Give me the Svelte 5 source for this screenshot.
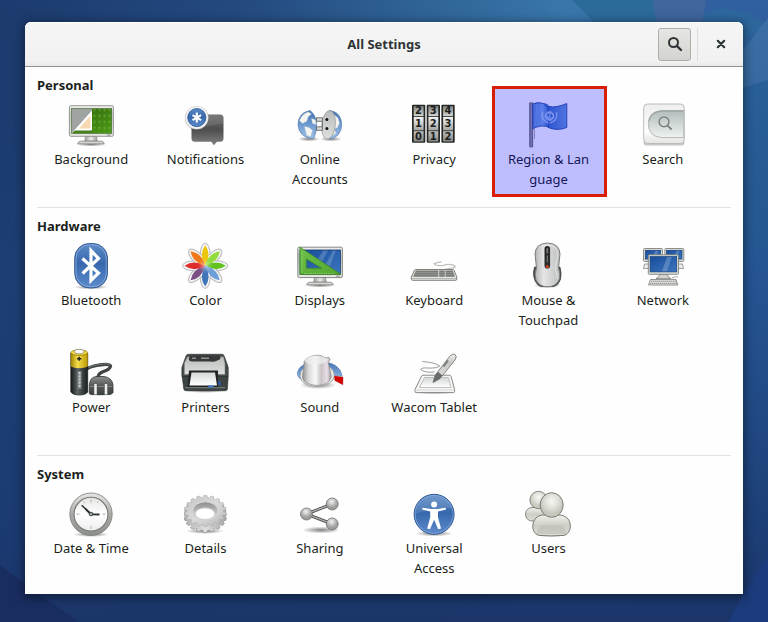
<script>
  const sections = [
    {
      title: 'Personal',
      items: [
        { icon: 'background', lines: ['Background'] },
        { icon: 'notifications', lines: ['Notifications'] },
        { icon: 'accounts', lines: ['Online', 'Accounts'] },
        { icon: 'privacy', lines: ['Privacy'] },
        { icon: 'region', lines: ['Region & Lan', 'guage'], marked: true },
        { icon: 'search', lines: ['Search'] }
      ]
    },
    {
      title: 'Hardware',
      items: [
        { icon: 'bluetooth', lines: ['Bluetooth'] },
        { icon: 'color', lines: ['Color'] },
        { icon: 'displays', lines: ['Displays'] },
        { icon: 'keyboard', lines: ['Keyboard'] },
        { icon: 'mouse', lines: ['Mouse &', 'Touchpad'] },
        { icon: 'network', lines: ['Network'] },
        { icon: 'power', lines: ['Power'] },
        { icon: 'printers', lines: ['Printers'] },
        { icon: 'sound', lines: ['Sound'] },
        { icon: 'wacom', lines: ['Wacom Tablet'] }
      ]
    },
    {
      title: 'System',
      items: [
        { icon: 'clock', lines: ['Date & Time'] },
        { icon: 'details', lines: ['Details'] },
        { icon: 'sharing', lines: ['Sharing'] },
        { icon: 'access', lines: ['Universal', 'Access'] },
        { icon: 'users', lines: ['Users'] }
      ]
    }
  ];

  const petals = ['#edc60a', '#93dc3c', '#62c31e', '#6f9fd8', '#3f74b8', '#7b4f86', '#e02b2b', '#f2791a'];

  const wheels = [
    { x: 2, digits: ['2', '1', '0'] },
    { x: 16.7, digits: ['3', '2', '1'] },
    { x: 31.4, digits: ['4', '3', '2'] }
  ];

  function gearPath(cx, cy, rx, ry, teeth) {
    let d = '';
    for (let i = 0; i < teeth; i++) {
      const steps = [[-0.34, 0.87], [-0.22, 1], [0.22, 1], [0.34, 0.87]];
      for (const [offset, k] of steps) {
        const a = ((i + offset) / teeth) * Math.PI * 2 - Math.PI / 2;
        const x = (cx + Math.cos(a) * rx * k).toFixed(2);
        const y = (cy + Math.sin(a) * ry * k).toFixed(2);
        d += (d ? 'L' : 'M') + x + ' ' + y;
      }
    }
    return d + 'Z';
  }
  const gearTop = gearPath(24.3, 21, 21, 15.6, 18);
  const gearLayers = [26.5, 25.5, 24.5, 23.5, 22.5].map((cy) => gearPath(24.3, cy, 21, 15.6, 18));
</script>

{#snippet monitorStand()}
  <ellipse cx="24" cy="43.5" rx="15" ry="2" fill="url(#shade)" />
  <path d="M18.5 35h11l.8 5h-12.6z" fill="url(#stand)" stroke="#8a8c88" stroke-width=".6" />
  <path d="M13.5 40.2h21q2.3.3 2.8 2.6h-26.6q.5-2.3 2.8-2.6z" fill="#d6d7d3" stroke="#7f817d" stroke-width=".8" />
{/snippet}

{#snippet smallMonitor(x, y, w, h)}
  <rect {x} {y} width={w} height={h} rx="1" fill="#dcddd8" stroke="#73766f" stroke-width=".8" />
  <rect x={x + 1.8} y={y + 1.8} width={w - 3.6} height={h - 4.2} fill="url(#screen)" stroke="#17407f" stroke-width=".7" />
  <path d={`M${x + w * 0.45} ${y + h - 3}L${x + w * 0.62} ${y + 2.2}H${x + w * 0.78}L${x + w * 0.62} ${y + h - 3}Z`} fill="#fff" opacity=".2" />
{/snippet}

{#snippet picture(name)}
  <svg class="icon" viewBox="0 0 48 48" aria-hidden="true">
    {#if name === 'background'}
      {@render monitorStand()}
      <rect x="2.4" y="4.7" width="44" height="30.6" rx="1.5" fill="url(#frame)" stroke="#8b8d89" stroke-width=".9" />
      <rect x="4.3" y="7.5" width="40.4" height="25" fill="url(#green)" stroke="#4b6b35" stroke-width=".6" />
      <rect x="25" y="8" width="19.5" height="24" fill="url(#damask)" />
      <path d="M4.600 7.800h20.400v21.500l-20.400 3z" fill="#9fa4a2" />
      <path d="M4.600 32.200 25 9.500v20z" fill="#fff" />
      <path d="M12 27.500 23.500 14.500v13z" fill="#f6d9b0" />
      <path d="M5 32h20v-2.500H8z" fill="#497f1c" />
      <path d="M40 34h3.500" stroke="#777" stroke-width=".8" />
    {:else if name === 'notifications'}
      <path d="M14 13.400h25q3.500 0 3.500 3.500v20.300q0 3.500-3.500 3.500h-3l-3.200 3.500-2.500-3.500H14q-3.500 0-3.500-3.500V16.900q0-3.500 3.500-3.500z" fill="url(#bubble)" />
      <path d="M11 26.500q16-1 31-4v-5.600q0-3-3.500-3H14q-3 0-3 3z" fill="#fff" opacity=".1" />
      <circle cx="15.8" cy="17.2" r="12" fill="#777" opacity=".35" />
      <circle cx="15.8" cy="16.6" r="11.4" fill="#f7f7f7" stroke="#cfd0cf" stroke-width=".6" />
      <circle cx="15.8" cy="16.6" r="9.1" fill="url(#blue)" stroke="#245093" stroke-width=".8" />
      <path d="M15.800 11.600v10M11.500 14.100l8.600 5M20.100 14.100l-8.600 5" stroke="#fff" stroke-width="2.200" />
    {:else if name === 'accounts'}
      <ellipse cx="13" cy="38" rx="11" ry="2.5" fill="url(#shade)" />
      <ellipse cx="35" cy="38" rx="11" ry="2.5" fill="url(#shade)" />
      <path d="M14 9.500Q2 12 2 23.800 3 36.500 17.500 37.800 21 31 20.600 22.500 20 14 14 9.500z" fill="url(#globe)" stroke="#6284b5" stroke-width=".8" />
      <path d="M3.500 19.500Q6 12.500 12.500 11l3 2-3.500 3-1 4-4.500 2.500zM8.500 25.500l4.500 1 3.500 3-2 6-3.500-1-1.500-4.500zM15.500 17.500l4 1.500.5 4.500-3.500-1z" fill="#f3f4ef" stroke="#c9cdc7" stroke-width=".3" />
      <path d="M34 9.400Q45.500 11.500 45.700 23.800 45 36.500 33 38z" fill="url(#globe)" stroke="#6284b5" stroke-width=".8" />
      <path d="M38 13.500l4 3.500 1.500 5-2 4.500-3.500 1.500 2 4-3 2.500z" fill="#f3f4ef" stroke="#c9cdc7" stroke-width=".3" />
      <ellipse cx="32.5" cy="23.8" rx="6.8" ry="14.3" transform="rotate(6 32.500 23.800)" fill="url(#silver)" stroke="#93979a" stroke-width=".7" />
      <path d="M20.500 16.800h6v3.500h-6zM20.500 25.800h6v3.500h-6z" fill="#d7d8d6" stroke="#555753" stroke-width=".8" />
      <path d="M26.500 17.200v11.600" stroke="#777" stroke-width="1" />
      <circle cx="30.9" cy="18.6" r="1.5" fill="#111" />
      <circle cx="30.9" cy="27.6" r="1.5" fill="#111" />
    {:else if name === 'privacy'}
      {#each wheels as wheel}
        <rect x={wheel.x} y="3.8" width="13.3" height="38" rx="1" fill="#262826" />
        <rect x={wheel.x + 1.7} y="5.2" width="9.9" height="10" fill="url(#wheelTop)" />
        <rect x={wheel.x + 1.7} y="16" width="9.9" height="13.4" fill="url(#wheelMid)" />
        <rect x={wheel.x + 1.7} y="30.2" width="9.9" height="10.3" fill="url(#wheelBottom)" />
        <text x={wheel.x + 6.6} y="13" class="digit">{wheel.digits[0]}</text>
        <text x={wheel.x + 6.6} y="26" class="digit">{wheel.digits[1]}</text>
        <text x={wheel.x + 6.6} y="39" class="digit">{wheel.digits[2]}</text>
      {/each}
    {:else if name === 'region'}
      <rect x="5.5" y="1.5" width="3.3" height="44.8" rx=".8" fill="url(#pole)" stroke="#555" stroke-width=".4" />
      <path d="M10.500 28v10" stroke="#999" stroke-width=".8" />
      <path d="M8.800 3Q14 .5 19.500 2.500 24 3 25 5.500 32 7 42.800 2.500V26.500Q34 30 25.500 27 23 24.500 17 25 11 26 8.800 28z" fill="url(#flag)" stroke="#264f9a" stroke-width=".9" />
      <path d="M24.500 5v21.500M19.500 3 24.800 7.500" stroke="#2956a3" stroke-width=".9" />
      <path d="M13 3.500 11.500 24M17.500 4v19" stroke="#94b6e2" stroke-width=".7" opacity=".6" />
      <circle cx="25.5" cy="15" r="4.3" fill="#8db4e4" stroke="#cfe0f3" stroke-width=".8" />
      <path d="M18.500 11.500q-1.500 8 6.500 10.500M32.500 11.500q1.500 8-6.500 10.500" fill="none" stroke="#c8dbf3" stroke-width="1.300" stroke-dasharray="1.400 .5" />
      <path d="M22.500 13h3l-1 3zM26.500 12v5l2.500-2z" fill="#3a6db5" />
    {:else if name === 'search'}
      <rect x="4.5" y="39" width="41" height="5.5" rx="2.7" fill="#777" opacity=".4" />
      <rect x="4.7" y="3" width="40.6" height="39.6" rx="4" fill="url(#plate)" stroke="#b5b7b3" stroke-width=".9" />
      <path d="M44.800 9.500H22.500Q9.300 10.500 9.300 22.800 9.500 35.700 22.500 36.600h22.300z" fill="url(#field)" stroke="#b4bab6" stroke-width="1" />
      <path d="M44.500 10H22.500Q12 11 10 20" fill="none" stroke="#949c99" stroke-width="1" />
      <circle cx="25" cy="20.8" r="4.9" fill="none" stroke="#7c8280" stroke-width="1.500" />
      <path d="m28.600 24.600 4.100 4.100" stroke="#7c8280" stroke-width="1.900" />
    {:else if name === 'bluetooth'}
      <ellipse cx="24" cy="45" rx="17" ry="2.5" fill="url(#shade)" />
      <rect x="7.7" y="1.5" width="32.8" height="44.4" rx="14.5" fill="url(#blue)" stroke="#2c5590" stroke-width=".9" />
      <rect x="9" y="2.8" width="30.2" height="41.8" rx="13.3" fill="none" stroke="#8fb0dc" stroke-width=".8" />
      <path d="m15.500 16.500 16 14.500-7.500 7.500V8.500l7.500 8-16 15" fill="none" stroke="#fff" stroke-width="3.200" />
    {:else if name === 'color'}
      {#each petals as _, i}
        <ellipse cx="24.2" cy="13" rx="5" ry="11.8" transform={`rotate(${i * 45} 24.2 23.8)`} fill="#f4f4f4" stroke="#b8b8b8" stroke-width="1" />
      {/each}
      <circle cx="24.2" cy="23.8" r="11" fill="#f7f7f7" />
      {#each petals as fill, i}
        <path d="M24.200 23.800Q17.400 12.500 24.200 3.200 31 12.500 24.200 23.800z" transform={`rotate(${i * 45} 24.2 23.8)`} {fill} />
      {/each}
      <circle cx="24.2" cy="23.8" r="7" fill="url(#glow)" />
    {:else if name === 'displays'}
      {@render monitorStand()}
      <rect x="1.8" y="5.2" width="44.6" height="30.4" rx="1.5" fill="url(#frame)" stroke="#777a76" stroke-width=".9" />
      <rect x="4" y="8" width="40.4" height="24.3" fill="url(#screen)" stroke="#143b78" stroke-width=".8" />
      <path d="M22 17 27 8.500h5L26 20zM30 22l7-13.500h3L34 24z" fill="#fff" opacity=".18" />
      <path fill-rule="evenodd" d="M4 5.200 45 32.400H4zM10.300 17v9.200h15.500z" fill="url(#ruler)" stroke="#3d8c22" stroke-width=".8" />
      <path d="M6 9.500V30.500M8 31.500h31" stroke="#a6df86" stroke-width=".9" stroke-dasharray="1 1.200" />
      <path d="M40 34.200h4" stroke="#777" stroke-width=".8" />
    {:else if name === 'keyboard'}
      <path d="M31.500 19.800q-3.500 0-7.500 2 2 2.500 9 1.500 8-2 12 .8 1 2-5 2.200l-5.500 1" fill="none" stroke="#bfc1bd" stroke-width="1.300" />
      <path d="M5.500 27.500h37.300q1 0 1.300 1l2.700 6.500v2.200q0 1.100-1.300 1.100H2.500q-1.200 0-1.200-1.200v-2L4.300 28.500q.3-1 1.200-1z" fill="#e4e4e1" stroke="#70736e" stroke-width=".9" />
      <path d="M5.800 28.500h22.500v6.200H3.100zM29.200 28.500h5.600v6.200h-5.600zM35.500 28.500h7.200l2.200 6.200h-9.200z" fill="#777a75" />
      <path d="M5 30.500h38M4.300 32.600h40" stroke="#a9aca6" stroke-width=".5" />
      <path d="M2 36.500h44" stroke="#b5b7b2" stroke-width="1" />
    {:else if name === 'mouse'}
      <ellipse cx="23.5" cy="43" rx="13.5" ry="3.5" fill="url(#shade)" />
      <path d="M10.500 25Q8 32 11 39q3 5 6 5.500L30 44.500q4.500-1.500 6.500-7 1.500-6-.5-12.500z" fill="#4a4f50" stroke="#34383a" stroke-width=".6" />
      <path d="M23.500 1Q35.500 1.500 36 12L34.500 26q2.500 6 .5 12-3.500 6.800-11.500 6.800T12 38q-2-6 .5-12L11 12Q11.500 1.500 23.500 1z" fill="url(#mouseBody)" stroke="#7a7d7a" stroke-width="1" />
      <path d="M23.500 3Q33 3 33.500 12L31.500 27 34 37" fill="none" stroke="#fff" stroke-width="1" opacity=".5" />
      <rect x="20.5" y="4" width="5.6" height="22.5" rx="2.8" fill="#2a2c2c" />
      <rect x="22" y="5.5" width="2.6" height="6.5" rx="1.3" fill="#777" stroke="#000" stroke-width=".5" />
      <path d="M23.300 13.500v7" stroke="#828282" stroke-width="1" />
      <circle cx="23.3" cy="24.4" r="1.5" fill="#d8441e" />
    {:else if name === 'network'}
      {@render smallMonitor(4.5, 6.5, 19, 13)}
      {@render smallMonitor(25.8, 6.5, 19, 13)}
      <path d="M5.500 22h5v4.500h-6zM38.500 22h5l1 4.500h-6z" fill="#eee" stroke="#858782" stroke-width=".8" />
      {@render smallMonitor(9.3, 12.8, 30.2, 19.5)}
      <path d="M20.500 32.500h8l1 2.500 2.500 1.500H17l2.500-1.500z" fill="#d3d4d0" stroke="#777a75" stroke-width=".7" />
      <path d="M11.500 37.500h25.500l1.800 5.500H9.500z" fill="#e5e5e2" stroke="#7a7d78" stroke-width=".8" />
      <path d="M12 39.200h25M11 41.300h27" stroke="#8b8e89" stroke-width="1" stroke-dasharray="1.500 .5" />
      <path d="M33 36q4-2 6-1" stroke="#aaa" fill="none" stroke-width="1" />
    {:else if name === 'power'}
      <path d="M18 20.500q5.500-3 14-4.500 10.500-1.500 11.500 1-.5 3.500-7 5.500-5.500 2-5.500 6" fill="none" stroke="#3f4342" stroke-width="3.300" />
      <path d="M18 20q6-3 14-4.500 10-1.500 11 1" fill="none" stroke="#7f8583" stroke-width=".8" />
      <ellipse cx="33" cy="45" rx="14" ry="2" fill="url(#shade)" />
      <path d="M22.300 36Q23 27.500 30 27.500h7q8 1 9 8.500v7.500q-1 2-4 2H25q-2.700 0-2.700-2z" fill="url(#plug)" stroke="#2e3436" stroke-width=".8" />
      <path d="M22.600 37.500h23.200" stroke="#969b99" stroke-width=".7" />
      <path d="M28.500 35v10.500M39 35v10.500" stroke="#4b4f4e" stroke-width="4" />
      <path d="M28.500 35v10.500M39 35v10.500" stroke="#eceeed" stroke-width="2.600" />
      <path d="M3.800 4v39q2 3 8.500 3t8.400-3V4z" fill="url(#battery)" stroke="#161818" stroke-width=".7" />
      <path d="M3.800 4v13.500q3 1.800 8.500 1.800t8.400-1.800V4z" fill="url(#yellow)" />
      <ellipse cx="12.2" cy="3.6" rx="8.3" ry="2.8" fill="#f1d745" stroke="#93780a" stroke-width=".7" />
      <ellipse cx="12.2" cy="2.6" rx="4.6" ry="2.2" fill="#fafafa" stroke="#8c8c86" stroke-width=".8" />
      <path d="M12.200 7.800v4M10 9.800h4.400" stroke="#222" stroke-width="1.500" />
      <path d="M12.600 22v18" stroke="#aeb4b4" stroke-width="4" opacity=".45" />
      <path d="M12.600 23v16" stroke="#eee" stroke-width="2" stroke-dasharray="2.200 1" opacity=".7" />
    {:else if name === 'printers'}
      <ellipse cx="24" cy="41.5" rx="22" ry="2.5" fill="url(#shade)" />
      <path d="M7.500 5.300h33.300q2 0 2.500 2l3.900 11v8.500l-1 2.200H2L.9 27V18.500l4-11.200q.6-2 2.600-2z" fill="#454a4b" stroke="#2e3233" stroke-width=".7" />
      <path d="M6.500 7.700h36L44 14v11.500H3.300V14z" fill="url(#silver)" stroke="#6d716f" stroke-width=".5" />
      <path d="M9 6.500h28.500q2 0 2 1.500 0 3-2 3-4 2.500-8 1.500H11q-3.300 0-3.300-3z" fill="#35393a" />
      <path d="M11 9.200h4M20 9.300h8" stroke="#8e9391" stroke-width="1.400" />
      <path d="M1.200 27.500h46l-.8 12.500q-.3 1.700-2 1.700H5q-2 0-2.200-1.700z" fill="#3e4344" stroke="#242829" stroke-width=".6" />
      <path d="M8 21.500h29v16.700H6.500z" fill="#202425" />
      <path d="M10.500 23.500h23.500l2 13H8.500z" fill="url(#paper)" />
      <path d="M4 38.700h40" stroke="#7b8180" stroke-width="1" />
      <path d="M27.500 37.500h5" stroke="#3879d8" stroke-width="2" />
      <path d="M38.500 32v4" stroke="#1f62c8" stroke-width="1.800" />
    {:else if name === 'sound'}
      <ellipse cx="22" cy="36" rx="18" ry="4" fill="url(#shade)" />
      <path d="M1.200 24Q3 13.500 22 12.500 44 12.500 46.300 27.200L39 26.500 22 34 5 30.500Q1 28 1.200 24z" fill="url(#globe)" stroke="#5c82b6" stroke-width=".5" />
      <path d="M4 27Q4 16 21 15 38.500 16 38.500 27 37 36.500 21 37.500 5 37 4 27z" fill="#e6e6e6" stroke="#8e8e8e" stroke-width=".7" />
      <path d="M8 15Q7 9 18.500 6.300q8.500-.5 10 2.500l4.500-.3 1 2-1.700 3 3 14Q34 36 21 36.500 7 35.500 6.500 28z" fill="url(#knob)" stroke="#858585" stroke-width=".7" />
      <ellipse cx="19.5" cy="11.2" rx="11" ry="4.4" fill="#f0efee" opacity=".7" />
      <path d="m38.500 27 8.500 1.200-.2 7.500-8-4.300z" fill="#d40000" stroke="#9e0000" stroke-width=".4" />
    {:else if name === 'wacom'}
      <ellipse cx="25" cy="43" rx="21" ry="2.5" fill="url(#shade)" />
      <path d="M13 26.200h26.500q1.200 0 1.500 1l3.600 13.300v2q0 1.100-1.300 1.100H6.200q-1.200 0-1.200-1.100v-2l6.500-13.300q.5-1 1.500-1z" fill="#f5f5f4" stroke="#888a85" stroke-width="1" />
      <path d="M14.500 28.500h23.800l2.700 10H9.500z" fill="url(#paper)" stroke="#b2b4b0" stroke-width=".8" />
      <path d="M5.500 41h38.500" stroke="#d6d7d4" stroke-width="1" />
      <path d="M12.300 12.500q13 1 17.300 4.500-3 2.500-12 2-6.500-.5-7 1.500 4 3.500 14 2.500" fill="none" stroke="#8f918d" stroke-width=".9" />
      <path d="m23 33.500 2-7L39.500 7.500q3-3.500 5.500-2 2.500 2 0 5.500L29.800 29.800z" fill="url(#frame)" stroke="#777a76" stroke-width=".9" />
      <path d="m23 33.500 2-7 3-3.800 4.500 3.700-2.800 3.400z" fill="#676b69" />
      <path d="m33.500 17.500 4.500-6" stroke="#7d817e" stroke-width="2" />
    {:else if name === 'clock'}
      <ellipse cx="24" cy="44.5" rx="18" ry="2.5" fill="url(#shade)" />
      <circle cx="24" cy="24.2" r="21.2" fill="url(#rim)" stroke="#7c7e7a" stroke-width=".8" />
      <circle cx="24" cy="24.2" r="16.9" fill="url(#dial)" stroke="#777a76" stroke-width="1.100" />
      <path d="M24 9.500v3M24 36v3M9.500 24.200h3M35.500 24.200h3M16.800 11.500l.8 1.500M31.200 11.500l-.8 1.500" stroke="#aaa" stroke-width=".9" />
      <path d="m24 24.200-9.300-9" stroke="#2e3436" stroke-width="1.600" />
      <path d="m24 24.200-5.500-5.300M24 24.200l8.500.2" stroke="#2e3436" stroke-width="2" />
      <circle cx="24" cy="24" r="1.8" fill="#aaa" stroke="#2e3436" stroke-width=".9" />
    {:else if name === 'details'}
      <ellipse cx="24" cy="41" rx="19" ry="3" fill="url(#shade)" />
      <path d={gearLayers[0]} fill="#a0a0a0" stroke="#8e8e8e" stroke-width="1" />
      {#each gearLayers as d}
        <path {d} fill="url(#gearEdge)" />
      {/each}
      <path d={gearTop} fill="url(#gearFace)" stroke="#a6a6a6" stroke-width=".5" />
      <ellipse cx="24.3" cy="20.8" rx="14" ry="9.7" fill="#d4d4d4" />
      <ellipse cx="24.3" cy="21" rx="12.2" ry="8.8" fill="url(#hole)" />
      <ellipse cx="24" cy="23.7" rx="9.7" ry="5.8" fill="#fff" stroke="#c5c5c5" stroke-width=".7" />
    {:else if name === 'sharing'}
      <ellipse cx="25" cy="40" rx="19" ry="3.5" fill="url(#shade)" />
      <path d="m10.500 24 25.700-10M10.500 24l25.700 10" stroke="#555753" stroke-width="3" />
      <path d="m10.500 24 25.700-10M10.500 24l25.700 10" stroke="#b9bbb8" stroke-width="1.200" />
      <circle cx="10.5" cy="24" r="6" fill="url(#ball)" stroke="#70726f" stroke-width=".8" />
      <circle cx="36.2" cy="14" r="6" fill="url(#ball)" stroke="#70726f" stroke-width=".8" />
      <circle cx="36.2" cy="34" r="6" fill="url(#ball)" stroke="#70726f" stroke-width=".8" />
    {:else if name === 'access'}
      <ellipse cx="24" cy="43.5" rx="19" ry="3" fill="url(#shade)" />
      <circle cx="24.1" cy="24.3" r="20" fill="url(#blue)" stroke="#224c8a" stroke-width=".9" />
      <circle cx="24.1" cy="24.3" r="19" fill="none" stroke="#84a9dc" stroke-width=".8" />
      <path d="M5.500 24Q8 6 24 5.800 38 6 42 18 24 17 5.500 24z" fill="#fff" opacity=".12" />
      <circle cx="24.1" cy="14.6" r="3" fill="#fff" />
      <path d="m12.500 17.800 8.500 1.100h6.200l8.500-1.100.3 1.700-8 2v5.700l3 11.200-2.800.8-4.100-9.500-4.100 9.500-2.800-.8 3-11.200v-5.700l-8-2z" fill="#fff" />
    {:else if name === 'users'}
      <rect x="1.5" y="17.5" width="21" height="13.5" rx="6.5" fill="url(#body)" stroke="#7c7f77" stroke-width=".9" />
      <circle cx="14.6" cy="10" r="8.7" fill="url(#head)" stroke="#7c7f77" stroke-width=".9" />
      <ellipse cx="27.5" cy="45" rx="17" ry="2" fill="url(#shade)" />
      <path d="M18 25h19q9.200 2 9.400 11-.2 7.500-6.400 9.400-12.500 1-25 0Q8.700 43.500 8.700 36 9 27 18 25z" fill="url(#body)" stroke="#6f726b" stroke-width=".9" />
      <path d="M12.500 44q1-6 4-8.500h22q3 2.500 4 8.500z" fill="#b2b4a9" opacity=".4" />
      <ellipse cx="27.7" cy="15" rx="11.5" ry="12.3" fill="url(#head)" stroke="#6f726b" stroke-width=".9" />
    {/if}
  </svg>
{/snippet}

<div class="desktop">
  <svg class="wallpaper" viewBox="0 0 768 622" preserveAspectRatio="none" aria-hidden="true">
    <defs>
      <linearGradient id="sky" x1="0" y1="0" x2="1" y2="0">
        <stop offset="0" stop-color="#1c3a6d" /><stop offset=".3" stop-color="#23497f" /><stop offset=".5" stop-color="#2d5e92" /><stop offset=".74" stop-color="#3977ab" /><stop offset="1" stop-color="#2d62a3" />
      </linearGradient>
      <linearGradient id="dusk" x1="0" y1="0" x2="0" y2="1">
        <stop offset="0" stop-color="#1b3768" stop-opacity="0" /><stop offset=".4" stop-color="#1c437c" stop-opacity=".4" /><stop offset=".85" stop-color="#1b3a72" stop-opacity=".9" /><stop offset="1" stop-color="#1b3569" />
      </linearGradient>
      <linearGradient id="frame" x1="0" y1="0" x2="0" y2="1"><stop offset="0" stop-color="#f2f2f0" /><stop offset=".3" stop-color="#c6c8c4" /><stop offset="1" stop-color="#e8e8e5" /></linearGradient>
      <linearGradient id="stand" x1="0" y1="0" x2="1" y2="0"><stop offset="0" stop-color="#989a96" /><stop offset=".5" stop-color="#eee" /><stop offset="1" stop-color="#989a96" /></linearGradient>
      <linearGradient id="green" x1="0" y1="0" x2="1" y2="1"><stop offset="0" stop-color="#2f6310" /><stop offset="1" stop-color="#4d9b16" /></linearGradient>
      <pattern id="damask" width="5" height="6" patternUnits="userSpaceOnUse"><path d="m2.500 1 1.300 1.800-1.300 2-1.300-2z" fill="#75ba3a" opacity=".5" /></pattern>
      <linearGradient id="bubble" x1="0" y1="0" x2="0" y2="1"><stop offset="0" stop-color="#6b6b6b" /><stop offset=".5" stop-color="#4e4e4e" /><stop offset="1" stop-color="#828282" /></linearGradient>
      <linearGradient id="blue" x1="0" y1="0" x2="0" y2="1"><stop offset="0" stop-color="#5f8cc8" /><stop offset=".45" stop-color="#3768ad" /><stop offset="1" stop-color="#5d8bcb" /></linearGradient>
      <linearGradient id="globe" x1="0" y1="0" x2="0" y2="1"><stop offset="0" stop-color="#3f70b0" /><stop offset=".5" stop-color="#6f9bd2" /><stop offset="1" stop-color="#a3c2e8" /></linearGradient>
      <linearGradient id="screen" x1="0" y1="0" x2="1" y2="1"><stop offset="0" stop-color="#174c98" /><stop offset="1" stop-color="#3d76c0" /></linearGradient>
      <linearGradient id="silver" x1="0" y1="0" x2="0" y2="1"><stop offset="0" stop-color="#b9bcba" /><stop offset="1" stop-color="#dfe0de" /></linearGradient>
      <linearGradient id="wheelTop" x1="0" y1="0" x2="0" y2="1"><stop offset="0" stop-color="#858785" /><stop offset="1" stop-color="#d2d4d1" /></linearGradient>
      <linearGradient id="wheelMid" x1="0" y1="0" x2="0" y2="1"><stop offset="0" stop-color="#f2f2f2" /><stop offset="1" stop-color="#a4a6a3" /></linearGradient>
      <linearGradient id="wheelBottom" x1="0" y1="0" x2="0" y2="1"><stop offset="0" stop-color="#bfc1be" /><stop offset="1" stop-color="#858784" /></linearGradient>
      <linearGradient id="pole" x1="0" y1="0" x2="1" y2="0"><stop offset="0" stop-color="#555" /><stop offset=".5" stop-color="#a8a8a8" /><stop offset="1" stop-color="#555" /></linearGradient>
      <linearGradient id="flag" x1="0" y1="0" x2="1" y2="0"><stop offset="0" stop-color="#5c8cd0" /><stop offset=".3" stop-color="#79a6e0" /><stop offset=".45" stop-color="#3f72c0" /><stop offset="1" stop-color="#6c9cd8" /></linearGradient>
      <linearGradient id="plate" x1="0" y1="0" x2="0" y2="1"><stop offset="0" stop-color="#eee" /><stop offset=".7" stop-color="#fdfdfd" /><stop offset="1" stop-color="#e3e4e2" /></linearGradient>
      <linearGradient id="field" x1="0" y1="0" x2="0" y2="1"><stop offset="0" stop-color="#b1bcba" /><stop offset="1" stop-color="#eff3f2" /></linearGradient>
      <linearGradient id="ruler" x1="0" y1="0" x2="1" y2="1"><stop offset="0" stop-color="#6fc04a" /><stop offset="1" stop-color="#52a52f" /></linearGradient>
      <linearGradient id="mouseBody" x1="0" y1="0" x2="1" y2="0"><stop offset="0" stop-color="#b3b5b4" /><stop offset=".35" stop-color="#e6e6e6" /><stop offset="1" stop-color="#bcbebd" /></linearGradient>
      <linearGradient id="plug" x1="0" y1="0" x2="0" y2="1"><stop offset="0" stop-color="#8a8f8d" /><stop offset=".5" stop-color="#565b5a" /><stop offset="1" stop-color="#3c4140" /></linearGradient>
      <linearGradient id="battery" x1="0" y1="0" x2="1" y2="0"><stop offset="0" stop-color="#151819" /><stop offset=".4" stop-color="#5b6365" /><stop offset="1" stop-color="#1b1e1f" /></linearGradient>
      <linearGradient id="yellow" x1="0" y1="0" x2="1" y2="0"><stop offset="0" stop-color="#a48500" /><stop offset=".4" stop-color="#f6dc4c" /><stop offset="1" stop-color="#bc9b05" /></linearGradient>
      <linearGradient id="paper" x1="0" y1="0" x2="0" y2="1"><stop offset="0" stop-color="#d5d8d8" /><stop offset="1" stop-color="#fff" /></linearGradient>
      <linearGradient id="knob" x1="0" y1="0" x2="1" y2="0"><stop offset="0" stop-color="#8f8f8f" /><stop offset=".2" stop-color="#d8d8d8" /><stop offset=".45" stop-color="#f9f9f9" /><stop offset=".65" stop-color="#c9c3c6" /><stop offset=".85" stop-color="#eadfe9" /><stop offset="1" stop-color="#999" /></linearGradient>
      <linearGradient id="rim" x1="0" y1="0" x2="0" y2="1"><stop offset="0" stop-color="#e6e7e4" /><stop offset=".5" stop-color="#a9aba7" /><stop offset="1" stop-color="#8d8f8b" /></linearGradient>
      <linearGradient id="dial" x1="0" y1="0" x2="0" y2="1"><stop offset="0" stop-color="#e5e6e4" /><stop offset=".5" stop-color="#fff" /><stop offset="1" stop-color="#eceeec" /></linearGradient>
      <linearGradient id="gearEdge" x1="0" y1="0" x2="1" y2="0"><stop offset="0" stop-color="#b0b0b0" /><stop offset=".5" stop-color="#dedede" /><stop offset="1" stop-color="#a5a5a5" /></linearGradient>
      <linearGradient id="gearFace" x1="0" y1="0" x2="1" y2="1"><stop offset="0" stop-color="#c4c4c4" /><stop offset=".5" stop-color="#dadada" /><stop offset="1" stop-color="#b8b8b8" /></linearGradient>
      <linearGradient id="hole" x1="0" y1="0" x2="0" y2="1"><stop offset="0" stop-color="#8c8c8c" /><stop offset=".6" stop-color="#c4c4c4" /><stop offset="1" stop-color="#ddd" /></linearGradient>
      <radialGradient id="ball" cx=".45" cy=".3"><stop offset="0" stop-color="#f2f2f2" /><stop offset="1" stop-color="#9c9e9b" /></radialGradient>
      <radialGradient id="head" cx=".5" cy=".35"><stop offset="0" stop-color="#f7f7f4" /><stop offset=".5" stop-color="#e2e3dc" /><stop offset="1" stop-color="#c6c8be" /></radialGradient>
      <linearGradient id="body" x1="0" y1="0" x2="0" y2="1"><stop offset="0" stop-color="#f1f1ec" /><stop offset=".5" stop-color="#cdcfc6" /><stop offset="1" stop-color="#dcddd6" /></linearGradient>
      <radialGradient id="shade"><stop offset="0" stop-color="#000" stop-opacity=".5" /><stop offset="1" stop-color="#000" stop-opacity="0" /></radialGradient>
      <radialGradient id="glow"><stop offset="0" stop-color="#fff" stop-opacity=".45" /><stop offset="1" stop-color="#fff" stop-opacity="0" /></radialGradient>
    </defs>
    <rect width="768" height="622" fill="url(#sky)" />
    <path d="M572 0H652L662 40H612z" fill="#2b6b9a" />
    <path d="M652 0H706L700 40H660z" fill="#3f669d" />
    <path d="M706 0H768V40H700z" fill="#3160a0" />
    <path d="M720 8Q748 10 765 25L742 44H700L704 14z" fill="#2c6e9c" opacity=".6" />
    <path d="M768 18 743 50V88L768 80z" fill="#3d70a8" />
    <path d="M743 88 768 80V250H743z" fill="#2b649d" />
    <rect width="768" height="622" fill="url(#dusk)" />
    <path d="M0 565Q45 600 80 622H0z" fill="#1a2d61" />
    <path d="M768 555Q745 590 728 622H768z" fill="#1c3b7c" />
    <path d="M125 594Q110 612 70 622H430L490 594z" fill="#1b3769" opacity=".6" />
  </svg>

  <main class="window">
    <header class="bar">
      <h1>All Settings</h1>
      <div class="controls">
        <button class="find" aria-label="Search settings">
          <svg viewBox="0 0 16 16" aria-hidden="true">
            <circle cx="6.5" cy="6.5" r="4.5" fill="none" stroke="#2e3436" stroke-width="2" />
            <path d="m9.800 9.800 4.200 4.200" stroke="#2e3436" stroke-width="2.400" stroke-linecap="round" />
          </svg>
        </button>
        <button class="close" aria-label="Close">
          <svg viewBox="0 0 16 16" aria-hidden="true">
            <path d="m4.800 4.800 6.400 6.400M11.200 4.800l-6.400 6.400" stroke="#2e3436" stroke-width="2.200" stroke-linecap="round" />
          </svg>
        </button>
      </div>
    </header>

    {#each sections as section}
      <section>
        <h2>{section.title}</h2>
        <div class="grid">
          {#each section.items as item}
            <button class="item" class:marked={item.marked}>
              {@render picture(item.icon)}
              <span class="label">{#each item.lines as line}<span>{line}</span>{/each}</span>
            </button>
          {/each}
        </div>
      </section>
    {/each}
  </main>
</div>

<style>
  .desktop {
    position: relative;
    box-sizing: border-box;
    min-height: 100vh;
    padding: 22px 25px 28px;
    background: #1b3768;
    font-family: "Noto Sans", "Open Sans", sans-serif;
    font-size: 13px;
    line-height: 20px;
    color: #1c1f20;
  }

  .wallpaper {
    position: absolute;
    inset: 0;
    width: 100%;
    height: 100%;
  }

  .window {
    position: relative;
    background: #fefefe;
    border-radius: 6px 6px 0 0;
    box-shadow: 0 2px 10px 2px rgba(0, 0, 0, 0.4);
    padding-bottom: 16px;
  }

  .bar {
    display: grid;
    grid-template-columns: 1fr auto 1fr;
    align-items: center;
    height: 44px;
    border-bottom: 1px solid #90918e;
    border-radius: 6px 6px 0 0;
    background: linear-gradient(#f5f5f5, #f1f1f1 90%, #e9e9e8);
    box-shadow: inset 0 1px #fff;
  }

  h1,
  h2 {
    margin: 0;
    font-size: 13px;
    font-weight: 700;
  }

  h1 {
    grid-column: 2;
    color: #2e3436;
  }

  .controls {
    display: flex;
    justify-content: flex-end;
    gap: 6px;
  }

  button {
    font: inherit;
    color: inherit;
    border: 0;
    padding: 0;
    background: none;
  }

  .controls button {
    display: flex;
    align-items: center;
    justify-content: center;
  }

  .find {
    width: 33px;
    height: 33px;
    border: 1px solid #adaea9;
    border-radius: 3px;
    background: linear-gradient(#e6e6e4, #d3d3cf);
  }

  .close {
    width: 46px;
    height: 33px;
    border-left: 1px solid #dcdcda;
  }

  .controls svg {
    width: 16px;
    height: 16px;
  }

  section {
    margin: 0 12px;
    padding-top: 8px;
  }

  section + section {
    margin-top: 18px;
    border-top: 1px solid #e3e3e3;
  }

  .grid {
    display: grid;
    grid-template-columns: repeat(6, 1fr);
    row-gap: 19px;
    margin: 6px 11px 0 -3px;
  }

  .item {
    position: relative;
    display: flex;
    flex-direction: column;
    align-items: center;
    min-height: 88px;
  }

  .icon {
    width: 48px;
    height: 48px;
    overflow: visible;
  }

  .label {
    display: flex;
    flex-direction: column;
    white-space: nowrap;
  }

  .marked::after {
    content: "";
    position: absolute;
    inset: -15px -1px -8px 1px;
    border: 3px solid #d81e05;
    background: rgba(0, 0, 255, 0.25);
  }

  .digit {
    font-family: "DejaVu Sans", sans-serif;
    font-size: 10px;
    font-weight: 700;
    text-anchor: middle;
    fill: #1c1e1c;
  }
</style>
